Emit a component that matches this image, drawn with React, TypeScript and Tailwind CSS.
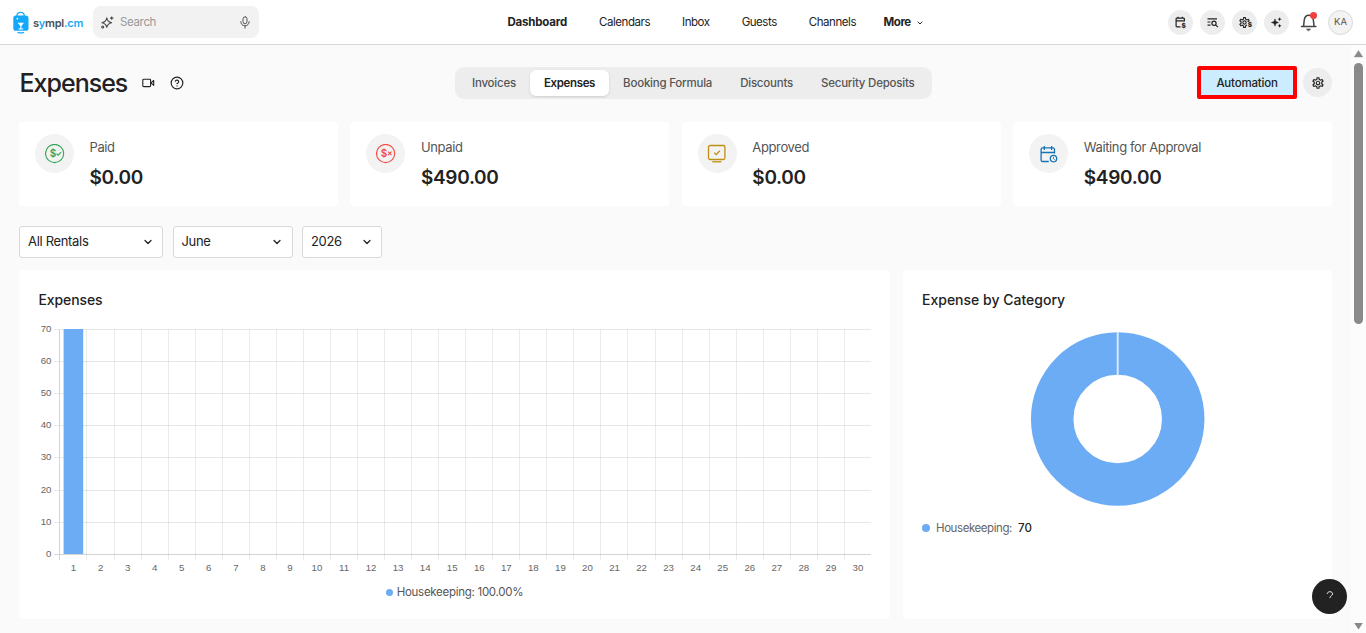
import type { ReactNode } from 'react'
import { ChevronDown, CircleHelp } from 'lucide-react'
import { MdOutlineSettings } from 'react-icons/md'

const NAV_ITEMS = ['Dashboard', 'Calendars', 'Inbox', 'Guests', 'Channels']
const TABS = ['Invoices', 'Expenses', 'Booking Formula', 'Discounts', 'Security Deposits']

function Logo() {
  return (
    <div className="flex items-center">
      <svg width="16" height="23" viewBox="0 0 16 23">
        <path d="M4 6V4.2C4 2.4 5.6 1.4 7.6 1.4S11.2 2.6 11.2 4.4V6" fill="none" stroke="#1eaaf5" strokeWidth="1.3" />
        <rect x="0.3" y="4.6" width="15.2" height="15.2" rx="2.6" fill="#13a8fb" />
        <circle cx="4.4" cy="7.6" r="0.9" fill="#fff" />
        <path d="M4.6 11.8h6.4L8.4 15v2.6h1.8v.9H5.6v-.9h1.7V15z" fill="#fff" />
        <path d="M4.6 21.3q3.2 1.2 6.4 0" fill="none" stroke="#13a8fb" strokeWidth="1.3" />
      </svg>
      <span className="ml-[4px] mt-[3px] text-[11px] font-semibold leading-none tracking-[-0.23px] text-[#454f59]">
        s<span className="text-[#1eaaf5]">y</span>mpl<span className="text-[#1eaaf5]">.cm</span>
      </span>
    </div>
  )
}

function SparkOutline() {
  return (
    <svg width="13" height="13" viewBox="0 0 13 13" fill="none" stroke="#4a4a4a" strokeWidth="1.1" strokeLinejoin="round">
      <path d="M5.8 1.8c.5 3 1.6 4.2 4.9 4.9-3.3.7-4.4 1.7-4.9 4.7C5.3 8.4 4.2 7.4.9 6.7c3.3-.7 4.4-1.9 4.9-4.9z" />
      <path d="M10.7.4v3.4M9 2.1h3.4" />
      <circle cx="1.7" cy="11" r="1" />
    </svg>
  )
}

function MicIcon() {
  return (
    <svg width="10" height="13" viewBox="0 0 10 13" fill="none" stroke="#555" strokeWidth="1" strokeLinecap="round">
      <rect x="3" y="0.8" width="4" height="7" rx="2" />
      <path d="M.8 5.6c0 2.5 1.7 4.2 4.2 4.2s4.2-1.7 4.2-4.2M5 9.8v2.4" />
    </svg>
  )
}

function CalendarDollarIcon() {
  return (
    <svg width="15" height="17" viewBox="-1 -2 15 17" fill="none" stroke="#222" strokeWidth="1.2">
      <path d="M10.4 5.6V2.9a.8.8 0 0 0-.8-.8H2.9a.8.8 0 0 0-.8.8v7.2c0 .5.3.8.8.8h3.6M2.1 4.9h8.3M4.1.7v2M8.4.7v2" />
      <text x="7.5" y="11.9" fill="#222" stroke="none" fontSize="6.5" fontWeight="800" fontFamily="Inter, sans-serif">$</text>
    </svg>
  )
}

function ListSearchIcon() {
  return (
    <svg width="13" height="13" viewBox="0 0 13 13" fill="none" stroke="#222" strokeWidth="1.2">
      <path d="M1.5 2.8h9.5M1.5 6h3M1.5 9.2h3" />
      <circle cx="8" cy="7.3" r="2.1" />
      <path d="M9.5 8.8l2.4 2.4" />
    </svg>
  )
}

function GearDollarIcon() {
  return (
    <span className="relative flex size-[13px] items-center justify-center text-[#222]">
      <MdOutlineSettings size={13} className="-ml-px" />
      <span className="absolute -right-px bottom-0 bg-[#ededed] pl-px text-[6.5px] font-extrabold leading-[7px]">$</span>
    </span>
  )
}

function SparklesIcon() {
  return (
    <svg width="13" height="13" viewBox="0 0 13 13" fill="#222">
      <path d="M5 2.8 6 5.5 8.7 6.5 6 7.5 5 10.2 4 7.5 1.3 6.5 4 5.5z" stroke="#222" strokeWidth=".4" />
      <path d="M9.6 1.2l.6 1.4 1.4.6-1.4.6-.6 1.4-.6-1.4-1.4-.6 1.4-.6zM9.6 7.8l.6 1.4 1.4.6-1.4.6-.6 1.4-.6-1.4-1.4-.6 1.4-.6z" />
    </svg>
  )
}

function BellIcon() {
  return (
    <svg width="18" height="20" viewBox="0 0 18 20" fill="none" stroke="#444" strokeWidth="1.5" strokeLinecap="round" strokeLinejoin="round">
      <path d="M1.5 14.4h14.4M3.6 13.8l.6-5.4c.3-3.2 2-5.2 4.6-5.2s4.3 2 4.6 5.2l.6 5.4" />
      <path d="M7 17.2h3.4l-1.7 1.3z" fill="#444" strokeWidth=".9" />
    </svg>
  )
}

function VideoIcon() {
  return (
    <svg width="13" height="10" viewBox="0 0 13 10" fill="none" stroke="#222" strokeWidth="1.1" strokeLinejoin="round">
      <rect x="0.8" y="1.2" width="7.8" height="7.4" rx="0.9" />
      <path d="M9 4.9l2.7-2.4v4.9z" />
    </svg>
  )
}

// Circle with a dollar sign and a small mark beside it
function MoneyIcon({ color, children }: { color: string; children: ReactNode }) {
  return (
    <svg width="20" height="20" viewBox="0 0 20 20" fill="none" stroke={color} strokeWidth="1.1">
      <circle cx="9.6" cy="9.5" r="9.1" />
      <text x="4.8" y="13.2" fill={color} stroke="none" fontSize="10" fontWeight="600" fontFamily="Inter, sans-serif">$</text>
      {children}
    </svg>
  )
}

function ApprovedIcon() {
  return (
    <svg width="20" height="20" viewBox="0 0 20 20" fill="none" stroke="#bd8e12" strokeWidth="1.3">
      <rect x="1.5" y="1.5" width="16.4" height="14" rx="1.5" />
      <path d="M5.3 17.8h9" />
      <path d="M7.2 8.6l2 2 3.6-3.8" />
    </svg>
  )
}

function WaitingIcon() {
  return (
    <svg width="20" height="20" viewBox="0 0 20 20" fill="none" stroke="#1873b5" strokeWidth="1.3">
      <path d="M15.5 9.5V5.4a1.5 1.5 0 0 0-1.5-1.5H3.6a1.5 1.5 0 0 0-1.5 1.5v10.5c0 .9.6 1.6 1.5 1.6h6.2M2.1 8.5h13.4M5.3 2v4M12.6 2v4" />
      <circle cx="14.5" cy="14.6" r="3.2" />
      <path d="M14.5 12.9v1.7l1.1 1.1" strokeWidth="1" />
    </svg>
  )
}

function RoundButton({ children }: { children: ReactNode }) {
  return (
    <button className="flex size-[25px] items-center justify-center rounded-full bg-[#ededed]">{children}</button>
  )
}

function Header() {
  return (
    <header className="flex h-[45px] items-center border-b border-[#d9d9d9] bg-white pl-[13px] pr-[13px]">
      <div className="flex w-[494.5px] items-center">
        <div className="w-[80px]"><Logo /></div>
        <div className="flex h-8 w-[166px] items-center rounded-lg bg-[#f2f2f2] pl-2 pr-[9px]">
          <SparkOutline />
          <span className="ml-1.5 mt-px flex-1 text-[11.5px] tracking-[-0.35px] text-[#999]">Search</span>
          <MicIcon />
        </div>
      </div>
      <nav className="mt-[2px] flex items-center gap-8 whitespace-nowrap text-[11.5px] text-[#222]">
        {NAV_ITEMS.map((item) => (
          <a key={item} className={item === 'Dashboard' ? 'font-bold tracking-[-0.2px]' : 'tracking-[-0.45px]'}>{item}</a>
        ))}
        <a className="-ml-[4.5px] flex items-center gap-[5px] font-bold tracking-[-0.45px]">
          More
          <ChevronDown size={8} strokeWidth={3} className="-mt-px" />
        </a>
      </nav>
      <div className="ml-auto flex items-center gap-[7px]">
        <RoundButton><CalendarDollarIcon /></RoundButton>
        <RoundButton><ListSearchIcon /></RoundButton>
        <RoundButton><GearDollarIcon /></RoundButton>
        <RoundButton><SparklesIcon /></RoundButton>
        <div className="relative flex w-[25px] justify-center">
          <BellIcon />
          <span className="absolute right-[4.5px] top-0 size-[6.5px] rounded-full bg-[#f23f3f]" />
        </div>
        <div className="flex size-[25px] items-center justify-center rounded-full border border-[#d9d9d9] bg-[#f3f3f3] text-[9.5px] text-[#555]">
          KA
        </div>
      </div>
    </header>
  )
}

function StatCard({ label, amount, icon }: { label: string; amount: string; icon: ReactNode }) {
  return (
    <div className="flex h-[84px] rounded-[4px] bg-white pl-4 pt-3">
      <div className="flex size-[39px] shrink-0 items-center justify-center rounded-full bg-[#f3f3f3]">{icon}</div>
      <div className="ml-[15.5px] pt-1">
        <div className="text-[13px] leading-[18px] tracking-[-0.38px] text-[#555]">{label}</div>
        <div className="mt-[10px] text-[19px] font-semibold leading-6 tracking-[-0.3px] text-[#222]">{amount}</div>
      </div>
    </div>
  )
}

function Select({ value, className }: { value: string; className: string }) {
  return (
    <div className={`flex h-8 items-center justify-between rounded-[3px] border border-[#d9d9d9] bg-white pl-2 pr-[8.5px] text-[13px] text-[#222] ${className}`}>
      <span className="tracking-[-0.32px]">{value}</span>
      <ChevronDown size={12} strokeWidth={2.5} />
    </div>
  )
}

const DAYS = Array.from({ length: 30 }, (_, i) => i + 1)
const TICKS = [0, 10, 20, 30, 40, 50, 60, 70]

function BarChart() {
  const left = 21
  const bottom = 230
  const colWidth = 27.05
  const y = (v: number) => Math.floor(bottom + 0.3 - (v * 225) / 70) + 0.5
  return (
    <svg width="836" height="260" viewBox="0 0 836 260" className="block" fontFamily="Liberation Sans, sans-serif" fontSize="9.7" fill="#666">
      {TICKS.map((v) => (
        <g key={v}>
          <path d={`M16 ${y(v)}H833`} stroke={v === 0 ? '#d4d4d4' : '#e8e8e8'} />
          <text x="13.5" y={y(v) + 2.6} textAnchor="end">{v}</text>
        </g>
      ))}
      <path d="M21.5 5.5V236" stroke="#d4d4d4" />
      {DAYS.map((d) => (
        <g key={d}>
          {d < 30 && <path d={`M${Math.round(left + d * colWidth + 0.4) + 0.5} 5.5V236`} stroke="#000" strokeOpacity="0.08" />}
          <text x={left + (d - 0.5) * colWidth + 1} y="247" textAnchor="middle">{d}</text>
        </g>
      ))}
      <rect x="25.6" y="5" width="19.6" height="225" fill="#6cacf4" />
    </svg>
  )
}

function Donut() {
  return (
    <svg width="176" height="176" viewBox="0 0 176 176" className="block">
      <circle cx="87.7" cy="88" r="65.5" fill="none" stroke="#6cacf4" strokeWidth="42.5" />
      <path d="M87.7 1v43.5" stroke="#d7e8fc" strokeWidth="2" />
    </svg>
  )
}

export default function App() {
  return (
    <div className="flex h-[633px] w-[1366px] flex-col overflow-hidden bg-[#fafafa] font-['Inter',sans-serif]">
      <Header />
      <div className="flex min-h-0 flex-1">
        <main className="relative flex-1 pl-[19px] pr-[19px] pt-[21px]">
          <div className="flex h-[33px] items-center">
            <div className="flex w-[436px] items-center">
              <h1 className="mt-[2px] w-[123px] pl-[0.5px] text-[25px] font-medium leading-none tracking-[-1px] text-[#222]">Expenses</h1>
              <VideoIcon />
              <CircleHelp size={14} strokeWidth={2} className="ml-[15px] text-[#222]" />
            </div>
            <div className="flex h-8 items-center rounded-[9px] bg-[#ededed] p-[3px] text-[11.5px] font-medium text-[#555]">
              {TABS.map((tab) => (
                <button
                  key={tab}
                  className={tab === 'Expenses' ? 'h-[26px] rounded-[6px] bg-white px-[14px] pt-[2px] font-semibold tracking-[-0.35px] text-[#222] shadow-sm' : 'h-[26px] px-[14px] pt-[2px] tracking-[-0.22px]'}
                >
                  {tab}
                </button>
              ))}
            </div>
            <button className="ml-auto h-[33px] w-[100px] rounded-[2px] border-4 border-[#ff0000] bg-[#ccecff] pt-[2px] text-[11.5px] font-medium tracking-[-0.2px] text-[#222]">
              Automation
            </button>
            <button className="ml-1.5 flex size-[29px] items-center justify-center rounded-full bg-[#ededed] text-[#222]">
              <MdOutlineSettings size={14} />
            </button>
          </div>

          <div className="mt-[23px] grid grid-cols-4 gap-[12.67px]">
            <StatCard label="Paid" amount="$0.00" icon={<MoneyIcon color="#31a65a"><path d="M11.5 9.7l1.6 1.5 3-3" /></MoneyIcon>} />
            <StatCard label="Unpaid" amount="$490.00" icon={<MoneyIcon color="#f24a43"><path d="M12 7.7l3.5 3.5M15.5 7.7l-3.5 3.5" /></MoneyIcon>} />
            <StatCard label="Approved" amount="$0.00" icon={<ApprovedIcon />} />
            <StatCard label="Waiting for Approval" amount="$490.00" icon={<WaitingIcon />} />
          </div>

          <div className="mt-5 flex gap-[9.5px]">
            <Select value="All Rentals" className="w-[144px]" />
            <Select value="June" className="w-[120px]" />
            <Select value="2026" className="w-[80px]" />
          </div>

          <div className="mt-3 flex gap-[13px]">
            <section className="h-[349px] w-[871px] rounded-[4px] bg-white pl-[19px] pt-5">
              <h2 className="pl-[0.5px] text-[14px] font-medium leading-5 tracking-[-0.1px] text-[#222]">Expenses</h2>
              <div className="mt-[14px]"><BarChart /></div>
              <div className="flex items-center justify-center gap-1 pr-[19px] text-[11.5px] leading-4 tracking-[-0.28px] text-[#555]">
                <span className="size-[7px] rounded-full bg-[#6cacf4]" />
                <span>Housekeeping: 100.00%</span>
              </div>
            </section>
            <section className="h-[349px] flex-1 rounded-[4px] bg-white px-[19px] pt-5">
              <h2 className="text-[14px] font-medium leading-5 text-[#222]">Expense by Category</h2>
              <div className="mt-[21px] flex justify-center"><Donut /></div>
              <div className="mt-[13px] flex items-center text-[11.5px] leading-4">
                <span className="size-2 rounded-full bg-[#6cacf4]" />
                <span className="ml-1.5 tracking-[-0.42px] text-[#666]">Housekeeping:</span>
                <span className="ml-1.5 font-medium text-[#222]">70</span>
              </div>
            </section>
          </div>

          <button className="absolute bottom-[19px] right-[4px] flex size-[35px] items-center justify-center rounded-full bg-[#222]">
            <svg width="8" height="11" viewBox="0 0 8 11" fill="none" stroke="#e8e8e8" strokeWidth="1">
              <path d="M1.2 3C1.2 1.7 2.3.7 3.9.7c1.7 0 2.7.9 2.7 2.2C6.6 4.7 3.9 4.7 3.9 7" />
            </svg>
          </button>
        </main>

        {/* Scrollbar */}
        <div className="flex w-[15px] flex-col items-center bg-[#fcfcfc] pt-[5px]">
          <svg width="9" height="8" viewBox="0 0 9 8"><path d="M4.5.5 8.8 7H.2z" fill="#8a8a8a" stroke="#8a8a8a" strokeWidth=".4" strokeLinejoin="round" /></svg>
          <div className="mt-[5px] h-[261px] w-[9px] rounded-full bg-[#8a8a8a]" />
          <svg width="9" height="8" viewBox="0 0 9 8" className="mb-[3px] mt-auto"><path d="M4.5 7.5 8.8 1H.2z" fill="#8a8a8a" /></svg>
        </div>
      </div>
    </div>
  )
}
